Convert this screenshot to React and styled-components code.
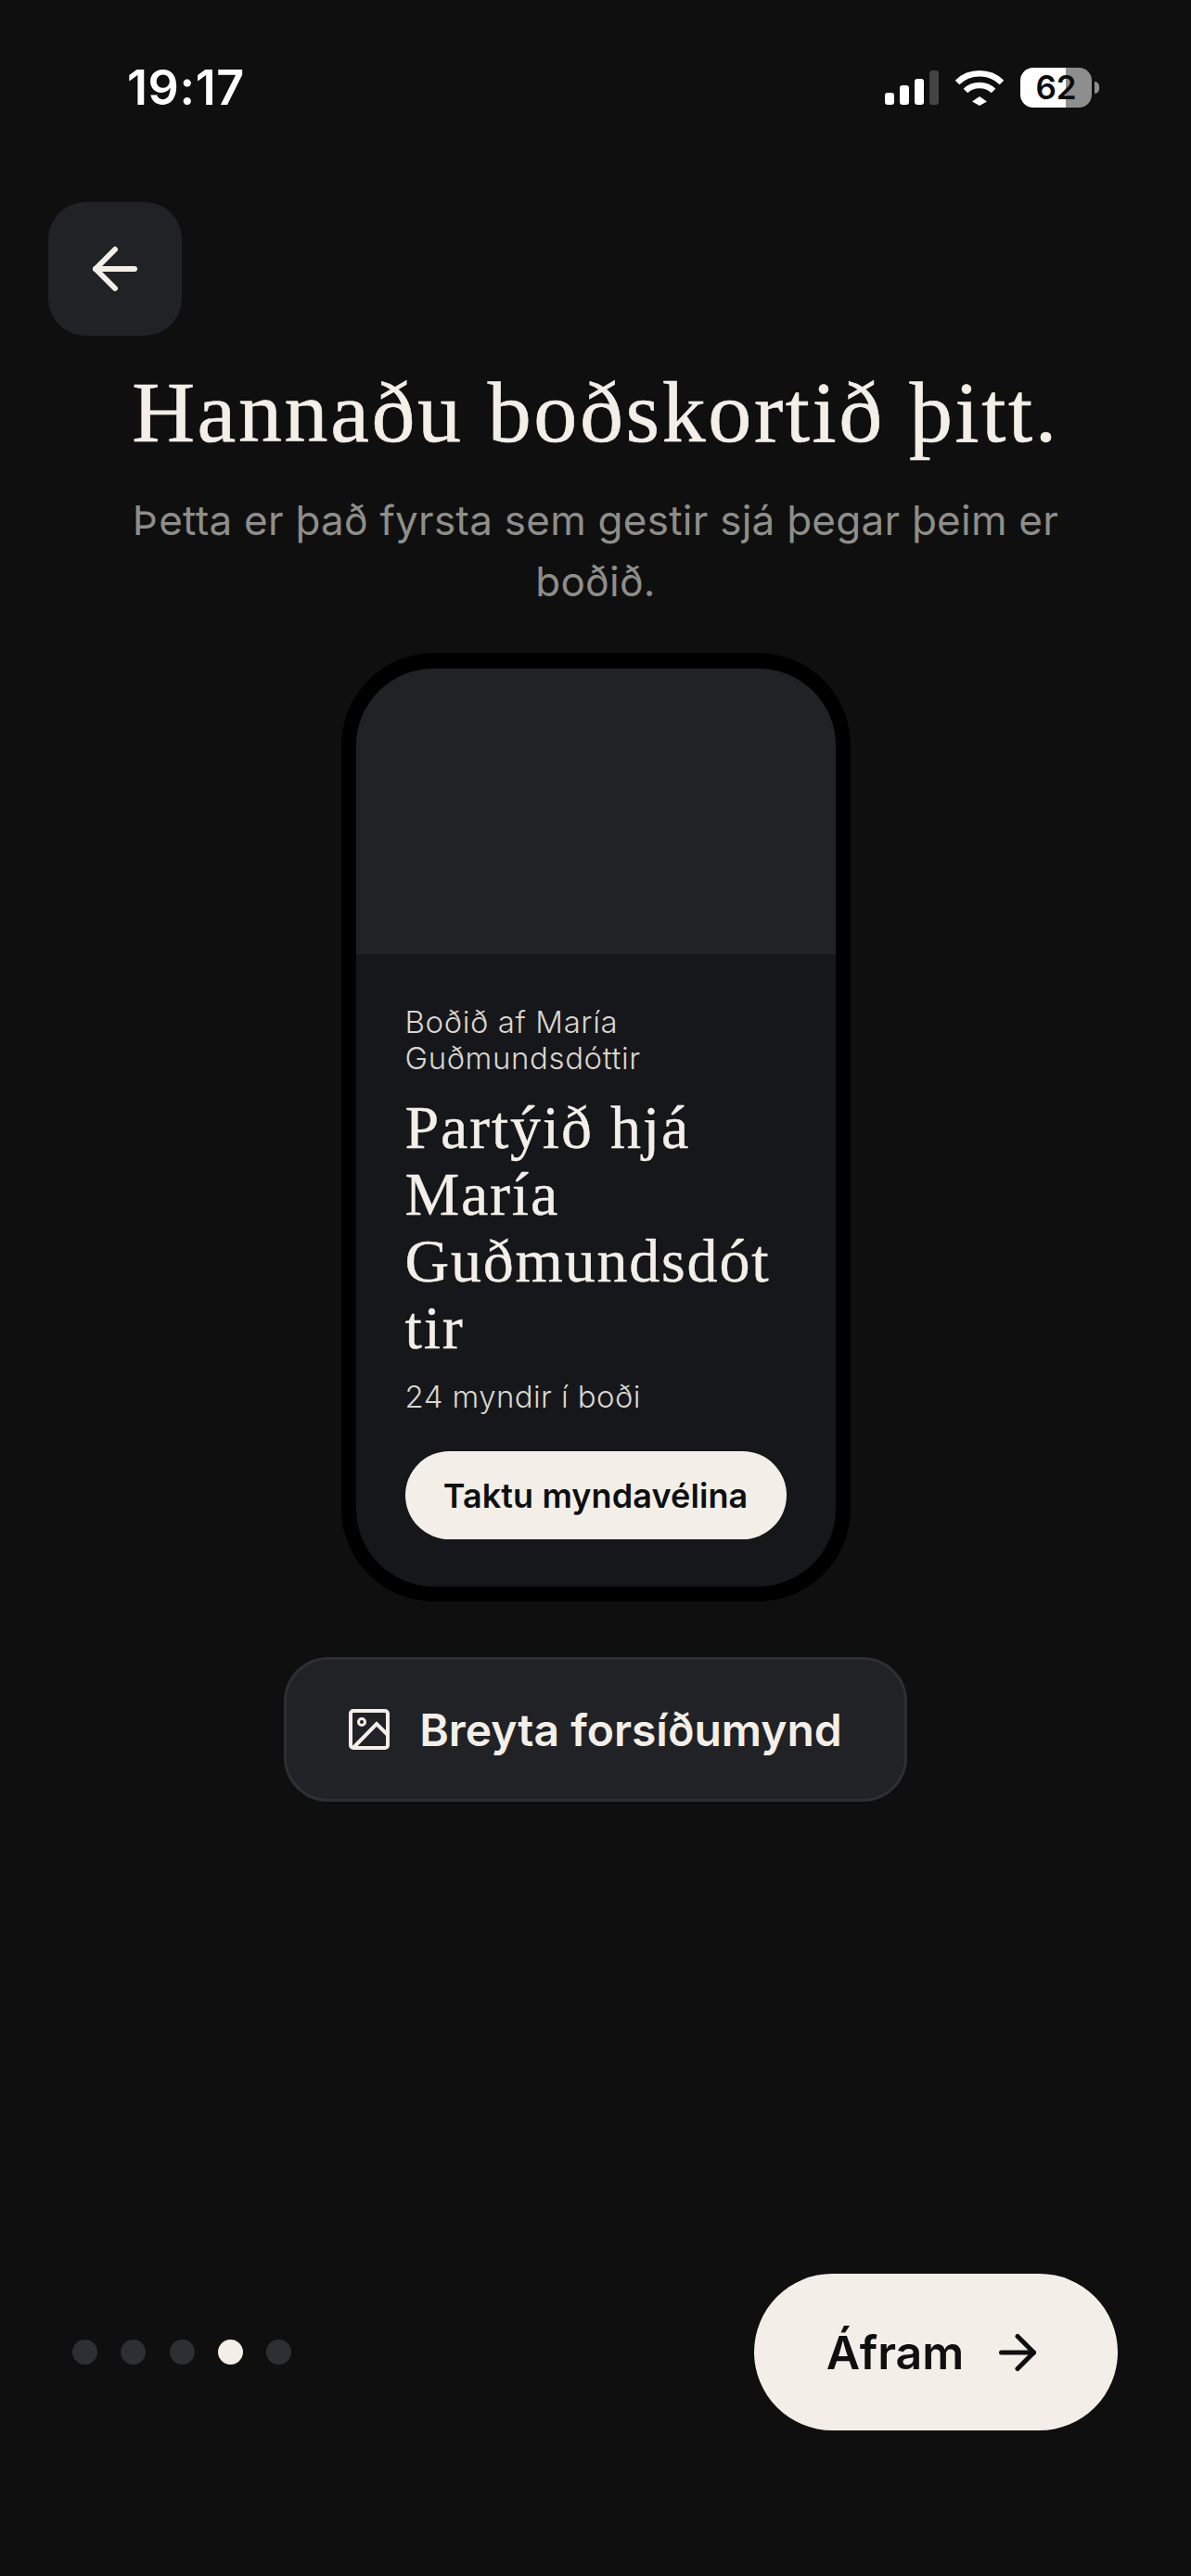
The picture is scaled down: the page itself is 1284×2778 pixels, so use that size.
import styled, {createGlobalStyle} from "styled-components"
import {ArrowLeft, ArrowRight} from "lucide-react"

const cream = "#f3efe8"
const serif = `"Liberation Serif", "Times New Roman", serif`
const sans = `Inter, "Noto Sans", sans-serif`

const Global = createGlobalStyle`
  html, body {
    margin: 0;
    background: #0f0f0f;
  }
  * {
    box-sizing: border-box;
  }
`

const Page = styled.div`
  width: 1284px;
  height: 2778px;
  display: flex;
  flex-direction: column;
  background: #0f0f0f;
  font-family: ${sans};
  color: ${cream};
`

const StatusBar = styled.div`
  height: 218px;
  flex: none;
  display: flex;
  align-items: flex-start;
  justify-content: space-between;
  padding: 73px 99px 0 137px;
`

const Time = styled.div`
  font-size: 52px;
  line-height: 43px;
  font-weight: 600;
  letter-spacing: 0.6px;
  color: #fff;
`

const StatusIcons = styled.div`
  display: flex;
  align-items: flex-start;
`

const Signal = styled.div`
  display: flex;
  align-items: flex-end;
  gap: 6px;
  height: 37px;
  margin: 3px 18px 0 0;
`

const SignalBar = styled.div`
  width: 10px;
  height: ${p => p.h}px;
  border-radius: 3px;
  background: ${p => (p.off ? "#444" : "#fff")};
`

const Battery = styled.div`
  width: 77px;
  height: 43px;
  margin-left: 18px;
  border-radius: 14px;
  background: linear-gradient(90deg, #fff 0 49px, #8e8e8e 49px);
  color: #0b0b0b;
  font-size: 35px;
  font-weight: 600;
  line-height: 43px;
  text-align: center;
`

const BatteryNub = styled.div`
  width: 5px;
  height: 13px;
  margin: 15px 0 0 3px;
  border-radius: 0 6px 6px 0;
  background: #8e8e8e;
`

const Header = styled.div`
  padding-left: 52px;
`

const BackButton = styled.div`
  width: 144px;
  height: 144px;
  border-radius: 40px;
  background: #212226;
  display: flex;
  align-items: center;
  justify-content: center;
`

const Title = styled.h1`
  margin: 30px 0 0;
  font-family: ${serif};
  font-weight: 400;
  font-size: 94px;
  line-height: 104px;
  letter-spacing: 2.6px;
  text-align: center;
  color: ${cream};
  -webkit-text-stroke: 0.6px ${cream};
`

const Subtitle = styled.p`
  width: 1040px;
  margin: 32px auto 0;
  font-size: 44px;
  line-height: 66px;
  letter-spacing: 0.25px;
  text-align: center;
  color: #8e8e8a;
`

const PhoneFrame = styled.div`
  width: 549px;
  height: 1023px;
  margin: 44px auto 0;
  flex: none;
  border: 16px solid #000;
  border-top-width: 17px;
  border-radius: 100px;
  background: #16171a;
  overflow: hidden;
`

const Cover = styled.div`
  height: 308px;
  background: #212226;
`

const CardBody = styled.div`
  padding: 54px 53px 0;
`

const InvitedBy = styled.div`
  font-size: 33px;
  line-height: 39px;
  font-weight: 300;
  letter-spacing: 0.6px;
  color: #d9d6cf;
`

const PartyName = styled.div`
  margin-top: 19px;
  font-family: ${serif};
  font-size: 66px;
  line-height: 72px;
  letter-spacing: 1.8px;
  color: ${cream};
  -webkit-text-stroke: 0.4px ${cream};
  overflow-wrap: anywhere;
`

const PhotoCount = styled.div`
  margin-top: 18px;
  font-size: 33px;
  line-height: 40px;
  font-weight: 300;
  letter-spacing: 0.4px;
  color: #d9d6cf;
`

const CameraButton = styled.div`
  width: 411px;
  height: 95px;
  margin-top: 39px;
  border-radius: 48px;
  background: ${cream};
  color: #0f0f0f;
  font-size: 36px;
  font-weight: 600;
  letter-spacing: 0.1px;
  display: flex;
  align-items: center;
  justify-content: center;
`

const CoverButton = styled.div`
  width: 672px;
  height: 156px;
  margin: 60px auto 0;
  flex: none;
  border: 3px solid #2e2f33;
  border-radius: 48px;
  background: #212226;
  display: flex;
  align-items: center;
  justify-content: center;
  gap: 32px;
  font-size: 48px;
  font-weight: 600;
`

const Footer = styled.div`
  margin-top: auto;
  padding: 0 79px 157px 78px;
  display: flex;
  align-items: center;
  justify-content: space-between;
`

const Dots = styled.div`
  display: flex;
  gap: 25.25px;
`

const Dot = styled.div`
  width: 27px;
  height: 27px;
  border-radius: 50%;
  background: ${p => (p.active ? cream : "#2e2f33")};
`

const NextButton = styled.div`
  width: 392px;
  height: 169px;
  border-radius: 85px;
  background: ${cream};
  color: #0f0f0f;
  font-size: 50px;
  font-weight: 600;
  display: flex;
  align-items: center;
  justify-content: center;
  gap: 28px;
`

const WifiIcon = () => (
  <svg width="52" height="38" viewBox="0 0 52 38" style={{marginTop: 3}}>
    <path d="M26 28l8 5.500-8 4.500-8-4.500z" fill="#fff" />
    <path d="M2 13C15 0 37 0 50 13" fill="none" stroke="#fff" strokeWidth="6.500" />
    <path d="M11 22c8-8 22-8 30 0" fill="none" stroke="#fff" strokeWidth="6.500" />
  </svg>
)

const ImageIcon = () => (
  <svg width="44" height="44" viewBox="0 0 44 44" fill="none" stroke={cream} strokeWidth="4">
    <rect x="2" y="2" width="40" height="40" rx="3" />
    <circle cx="14" cy="14" r="3.500" strokeWidth="3" />
    <path d="M4.700 42L30 16L42 28" />
  </svg>
)

export default function App() {
  return (
    <Page>
      <Global />
      <StatusBar>
        <Time>19:17</Time>
        <StatusIcons>
          <Signal>
            <SignalBar h={13} />
            <SignalBar h={21} />
            <SignalBar h={28} />
            <SignalBar h={37} off />
          </Signal>
          <WifiIcon />
          <Battery>62</Battery>
          <BatteryNub />
        </StatusIcons>
      </StatusBar>
      <Header>
        <BackButton>
          <ArrowLeft size={72} color={cream} strokeWidth={2} />
        </BackButton>
      </Header>
      <Title>Hannaðu boðskortið þitt.</Title>
      <Subtitle>Þetta er það fyrsta sem gestir sjá þegar þeim er boðið.</Subtitle>
      <PhoneFrame>
        <Cover />
        <CardBody>
          <InvitedBy>Boðið af María Guðmundsdóttir</InvitedBy>
          <PartyName>Partýið hjá María Guðmundsdóttir</PartyName>
          <PhotoCount>24 myndir í boði</PhotoCount>
          <CameraButton>Taktu myndavélina</CameraButton>
        </CardBody>
      </PhoneFrame>
      <CoverButton>
        <ImageIcon />
        Breyta forsíðumynd
      </CoverButton>
      <Footer>
        <Dots>
          {[0, 1, 2, 3, 4].map(i => (
            <Dot key={i} active={i === 3} />
          ))}
        </Dots>
        <NextButton>
          Áfram
          <ArrowRight size={60} strokeWidth={2} />
        </NextButton>
      </Footer>
    </Page>
  )
}
